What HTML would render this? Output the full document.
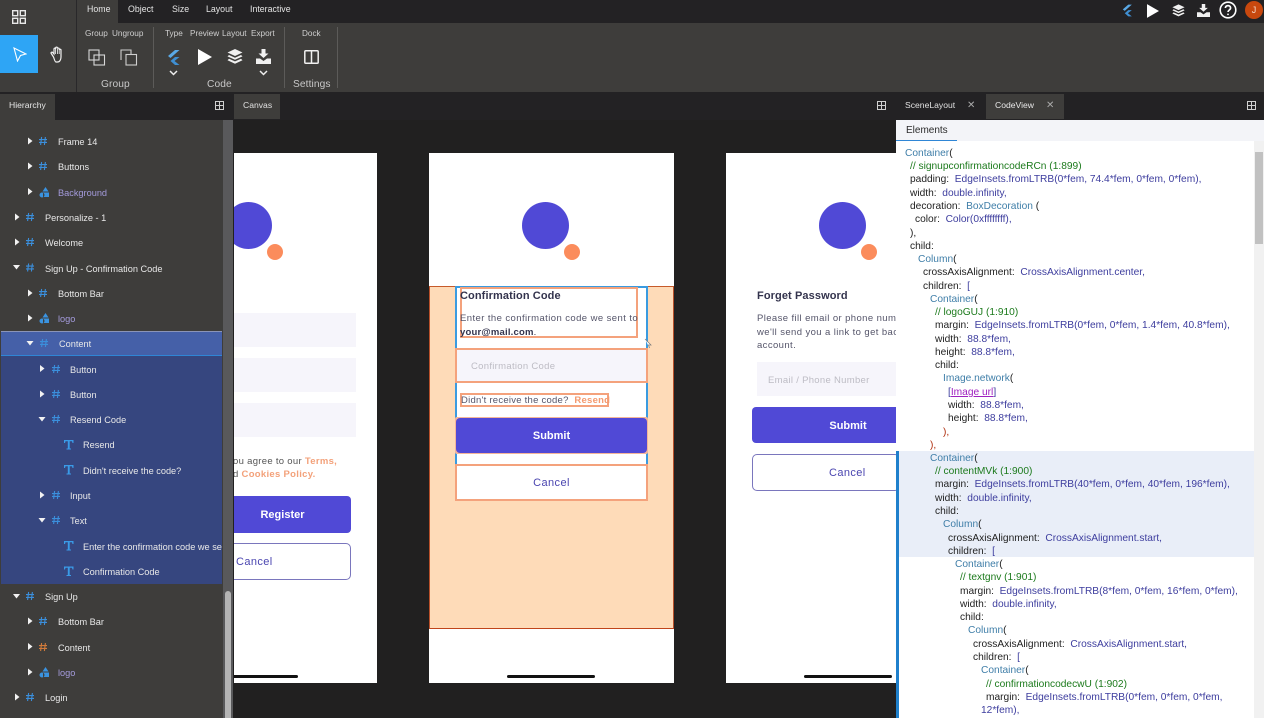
<!DOCTYPE html>
<html><head><meta charset="utf-8"><style>
html,body{margin:0;padding:0}
body{width:1264px;height:718px;overflow:hidden;position:relative;background:#212020;font-family:"Liberation Sans",sans-serif}
div,span.a,svg{position:absolute}
.t{white-space:pre;line-height:14px}
.rb{color:#cfcfcf;font-size:8.2px;top:27px}
.tab{color:#e4e4e4;font-size:8.8px;top:2px}
.sec{color:#c8c8c8;font-size:10.2px;top:78px;letter-spacing:.1px}
.tb{color:#e0e0e0;font-size:8.6px;top:98px}
.r{color:#e8e8e8;font-size:9.2px;white-space:pre;line-height:14px;margin-top:1px}
.c{font-size:10.2px;white-space:pre;line-height:14px;color:#222;margin-top:1px}
.v{color:#3d3d9e}.k{color:#3f7ea8}.g{color:#1c7a1c}
.ph{background:#fff;top:153px;height:530px}
.big{width:47px;height:47px;border-radius:50%;background:#5049d6;top:202px}
.sm{width:16px;height:16px;border-radius:50%;background:#fb8c5c;top:244px}
.inp{background:#f6f5fb}
.btn{background:#5049d6;border-radius:4px;color:#fff;font-weight:bold;font-size:11px;text-align:center}
.cn{background:#fff;border:1px solid #7a76bd;border-radius:5px;color:#4a45b0;font-size:11px;box-sizing:border-box;letter-spacing:.4px}
.p{white-space:pre;line-height:14px;margin-top:1px}
.bar{height:3px;background:#111;top:675px;border-radius:2px}
</style></head><body>

<!-- top bars -->
<div style="left:0;top:0;width:1264px;height:23px;background:#232224"></div>
<div style="left:0;top:0;width:77px;height:92px;background:#3e3d3b"></div>
<div style="left:77px;top:23px;width:1187px;height:69px;background:#3e3d3b"></div>
<div style="left:77px;top:0;width:41px;height:23px;background:#3e3d3b"></div>
<div style="left:76px;top:0;width:1px;height:92px;background:#29282a"></div>
<div style="left:0;top:92px;width:1264px;height:28px;background:#232224"></div>

<svg style="left:12px;top:10px" width="14" height="14" viewBox="0 0 14 14" fill="none" stroke="#e8e8e8" stroke-width="1.4"><rect x=".7" y=".7" width="5" height="5"/><rect x="8.3" y=".7" width="5" height="5"/><rect x=".7" y="8.3" width="5" height="5"/><rect x="8.3" y="8.3" width="5" height="5"/></svg>
<div style="left:0;top:35px;width:38px;height:38px;background:#2ea5f5"></div>
<svg style="left:13px;top:47px" width="14" height="15" viewBox="0 0 14 15" fill="none" stroke="#fff" stroke-width="1.1"><path d="M1 1L13 7L7.5 8.5L4.5 14Z"/></svg>
<svg style="left:50px;top:46px" width="15" height="17" viewBox="0 0 15 17" fill="#3e3d3b" stroke="#f2f2f2" stroke-width="1.2"><path d="M3.5 11L1.2 7.5C.6 6.3 2 5.6 2.8 6.6L4 8V3C4 1.8 5.6 1.8 5.6 3V1.9C5.6.8 7.4.8 7.4 1.9V2.8C7.4 1.8 9.2 1.8 9.2 3V4C9.2 3 11 3 11 4.2V11C11 14 9.5 16 7.5 16H6C4.8 16 4.2 12.5 3.5 11Z"/><path d="M5.6 3V8M7.4 3V8M9.2 4V8" stroke-width=".8"/></svg>

<div class="t tab" style="left:87px">Home</div>
<div class="t tab" style="left:128px">Object</div>
<div class="t tab" style="left:172px">Size</div>
<div class="t tab" style="left:206px">Layout</div>
<div class="t tab" style="left:250px">Interactive</div>

<div class="t rb" style="left:85px">Group</div>
<div class="t rb" style="left:112px">Ungroup</div>
<div class="t rb" style="left:165px">Type</div>
<div class="t rb" style="left:190px">Preview</div>
<div class="t rb" style="left:222px">Layout</div>
<div class="t rb" style="left:251px">Export</div>
<div class="t rb" style="left:302px">Dock</div>
<div class="t sec" style="left:101px">Group</div>
<div class="t sec" style="left:207px">Code</div>
<div class="t sec" style="left:293px">Settings</div>
<div style="left:153px;top:27px;width:1px;height:61px;background:#5c5b59"></div>
<div style="left:284px;top:27px;width:1px;height:61px;background:#5c5b59"></div>
<div style="left:337px;top:27px;width:1px;height:61px;background:#5c5b59"></div>

<svg style="left:88px;top:49px" width="18" height="17" viewBox="0 0 18 17" fill="none" stroke="#d8d8d8" stroke-width="1.1"><rect x="1" y="1" width="10" height="10"/><rect x="6" y="6" width="10.5" height="10"/></svg>
<svg style="left:120px;top:49px" width="18" height="17" viewBox="0 0 18 17" fill="none" stroke="#cfcfcf" stroke-width="1.1"><path d="M1 11V1H11V5"/><rect x="6" y="5.5" width="10.5" height="10.5"/></svg>
<svg style="left:167px;top:50px" width="14" height="15" viewBox="0 0 14 15"><path d="M8 0H12.5L3.5 8L1 6Z" fill="#5aa9e6"/><path d="M8 7H12.5L7.5 11L12.5 15H8L3.5 11Z" fill="#3f8fd2"/></svg>
<svg style="left:169px;top:70px" width="9" height="6" viewBox="0 0 9 6" fill="none" stroke="#eee" stroke-width="1.5"><path d="M1 1L4.5 4.5L8 1"/></svg>
<svg style="left:198px;top:49px" width="14" height="16" viewBox="0 0 14 16"><path d="M0 0L14 8L0 16Z" fill="#fff"/></svg>
<svg style="left:227px;top:49px" width="16" height="15" viewBox="0 0 16 15" fill="#f0f0f0"><path d="M8 0L15.5 3.5L8 7L.5 3.5Z"/><path d="M2 6L8 8.8L14 6L15.5 7.4L8 10.8L.5 7.4Z"/><path d="M2 9.8L8 12.4L14 9.8L15.5 11.2L8 14.8L.5 11.2Z"/></svg>
<svg style="left:256px;top:49px" width="15" height="15" viewBox="0 0 15 15" fill="#f0f0f0"><path d="M5.5 0H9.5V4.5H12.5L7.5 9L2.5 4.5H5.5Z"/><path d="M0 9.5H4L7.5 12L11 9.5H15V15H0Z"/></svg>
<svg style="left:259px;top:70px" width="9" height="6" viewBox="0 0 9 6" fill="none" stroke="#eee" stroke-width="1.5"><path d="M1 1L4.5 4.5L8 1"/></svg>
<svg style="left:304px;top:50px" width="15" height="14" viewBox="0 0 15 14" fill="none" stroke="#f0f0f0" stroke-width="1.5"><rect x=".8" y=".8" width="13.4" height="12.4" rx="1"/><path d="M7.5 1V13"/></svg>

<!-- top right -->
<svg style="left:1122px;top:4px" width="11" height="13" viewBox="0 0 14 15"><path d="M8 0H12.5L3.5 8L1 6Z" fill="#5aa9e6"/><path d="M8 7H12.5L7.5 11L12.5 15H8L3.5 11Z" fill="#3f8fd2"/></svg>
<svg style="left:1147px;top:4px" width="12" height="14" viewBox="0 0 14 16"><path d="M0 0L14 8L0 16Z" fill="#fff"/></svg>
<svg style="left:1172px;top:4px" width="13" height="13" viewBox="0 0 16 15" fill="#f0f0f0"><path d="M8 0L15.5 3.5L8 7L.5 3.5Z"/><path d="M2 6L8 8.8L14 6L15.5 7.4L8 10.8L.5 7.4Z"/><path d="M2 9.8L8 12.4L14 9.8L15.5 11.2L8 14.8L.5 11.2Z"/></svg>
<svg style="left:1197px;top:4px" width="13" height="13" viewBox="0 0 15 15" fill="#f0f0f0"><path d="M5.5 0H9.5V4.5H12.5L7.5 9L2.5 4.5H5.5Z"/><path d="M0 9.5H4L7.5 12L11 9.5H15V15H0Z"/></svg>
<svg style="left:1219px;top:1px" width="18" height="18" viewBox="0 0 18 18" fill="none" stroke="#fff" stroke-width="1.6"><circle cx="9" cy="9" r="7.8"/><path d="M6.4 7C6.4 3.8 11.6 3.8 11.6 7C11.6 9 9 9 9 11" stroke-width="1.7"/><circle cx="9" cy="13.4" r=".9" fill="#fff" stroke="none"/></svg>
<div style="left:1245px;top:1px;width:18px;height:18px;border-radius:50%;background:#c8480e;color:#f5d8c8;font-size:9px;line-height:18px;text-align:center">J</div>

<!-- tabs -->
<div style="left:0;top:94px;width:55px;height:26px;background:#3e3d3b"></div>
<div class="t tb" style="left:9px;color:#e8e8e8">Hierarchy</div>
<svg style="left:215px;top:101px" width="9" height="9" viewBox="0 0 9 9" fill="none" stroke="#cfcfcf"><rect x=".5" y=".5" width="8" height="8"/><path d="M4.5 0V9M0 4.5H9"/></svg>
<div style="left:234px;top:94px;width:46px;height:25px;background:#3e3d3b"></div>
<div class="t tb" style="left:243px">Canvas</div>
<svg style="left:877px;top:101px" width="9" height="9" viewBox="0 0 9 9" fill="none" stroke="#cfcfcf"><rect x=".5" y=".5" width="8" height="8"/><path d="M4.5 0V9M0 4.5H9"/></svg>
<div class="t tb" style="left:905px">SceneLayout</div>
<div class="t" style="left:967px;top:99px;color:#aaa;font-size:10px">✕</div>
<div style="left:986px;top:94px;width:78px;height:25px;background:#3e3d3b"></div>
<div class="t tb" style="left:995px;color:#e8e8e8">CodeView</div>
<div class="t" style="left:1046px;top:99px;color:#aaa;font-size:10px">✕</div>
<svg style="left:1247px;top:101px" width="9" height="9" viewBox="0 0 9 9" fill="none" stroke="#cfcfcf"><rect x=".5" y=".5" width="8" height="8"/><path d="M4.5 0V9M0 4.5H9"/></svg>

<!-- hierarchy -->
<div style="left:0;top:120px;width:223px;height:598px;background:#3e3d3b"></div>
<div style="left:223px;top:120px;width:10px;height:598px;background:#59595b"></div>
<div style="left:225px;top:591px;width:6px;height:127px;background:#b4b4b4;border-radius:3px 3px 0 0"></div>
<div style="left:1px;top:356px;width:221px;height:228px;background:#36467f"></div>
<div style="left:1px;top:331px;width:221px;height:25px;background:#4560a8;border-top:1px solid #8a94b8;border-bottom:1px solid #2f86d6;box-sizing:border-box"></div>

<div class="r" style="left:58px;top:134px">Frame 14</div>
<div class="r" style="left:58px;top:159px">Buttons</div>
<div class="r" style="left:58px;top:185px;color:#a49bdc">Background</div>
<div class="r" style="left:45px;top:210px">Personalize - 1</div>
<div class="r" style="left:45px;top:235px">Welcome</div>
<div class="r" style="left:45px;top:261px">Sign Up - Confirmation Code</div>
<div class="r" style="left:58px;top:286px">Bottom Bar</div>
<div class="r" style="left:58px;top:311px;color:#a49bdc">logo</div>
<div class="r" style="left:59px;top:336px">Content</div>
<div class="r" style="left:70px;top:362px">Button</div>
<div class="r" style="left:70px;top:387px">Button</div>
<div class="r" style="left:70px;top:412px">Resend Code</div>
<div class="r" style="left:83px;top:437px">Resend</div>
<div class="r" style="left:83px;top:463px">Didn't receive the code?</div>
<div class="r" style="left:70px;top:488px">Input</div>
<div class="r" style="left:70px;top:513px">Text</div>
<div class="r" style="left:83px;top:539px;width:139px;overflow:hidden">Enter the confirmation code we sent to your@mail.com</div>
<div class="r" style="left:83px;top:564px">Confirmation Code</div>
<div class="r" style="left:45px;top:589px">Sign Up</div>
<div class="r" style="left:58px;top:614px">Bottom Bar</div>
<div class="r" style="left:58px;top:640px">Content</div>
<div class="r" style="left:58px;top:665px;color:#a49bdc">logo</div>
<div class="r" style="left:45px;top:690px">Login</div>

<svg style="left:0;top:120px" width="223" height="598" viewBox="0 120 223 598">
<defs>
<path id="h" d="M2.6 0L1.6 8M6.4 0L5.4 8M0 2.6H8M0 5.4H8" stroke="#3b8fdc" stroke-width="1.1" fill="none"/>
<path id="ro" d="M0 -3.5L4.5 0L0 3.5Z" fill="#f2f2f2"/>
<path id="rd" d="M-3.5 -2L3.5 -2L0 2.5Z" fill="#f2f2f2"/>
<path id="sh" d="M6.5 0L9.5 4.5H3.5ZM4 5.5H10V10H4ZM3 5.5A2.500 2.500 0 1 0 3 10.500A2.500 2.500 0 1 0 3 5.500Z" fill="#3a93e0"/>
<path id="T" d="M0 0H9.5V3H8.500L8 1.200H5.700V8.500H7V9.500H2.500V8.500H3.800V1.200H1.500L1 3H0Z" fill="#3a9be8"/>
</defs>
<use href="#ro" x="28" y="141"/><use href="#h" x="39" y="137"/>
<use href="#ro" x="28" y="166"/><use href="#h" x="39" y="162"/>
<use href="#ro" x="28" y="191.5"/><use href="#sh" x="39" y="187"/>
<use href="#ro" x="15" y="217"/><use href="#h" x="26" y="213"/>
<use href="#ro" x="15" y="242"/><use href="#h" x="26" y="238"/>
<use href="#rd" x="16.500" y="267"/><use href="#h" x="26" y="263.500"/>
<use href="#ro" x="28" y="293"/><use href="#h" x="39" y="289"/>
<use href="#ro" x="28" y="318"/><use href="#sh" x="39" y="313"/>
<use href="#rd" x="30" y="343"/><use href="#h" x="40" y="339"/>
<use href="#ro" x="40" y="368.500"/><use href="#h" x="52" y="365"/>
<use href="#ro" x="40" y="394"/><use href="#h" x="52" y="390"/>
<use href="#rd" x="42" y="419"/><use href="#h" x="52" y="415"/>
<use href="#T" x="64" y="440"/>
<use href="#T" x="64" y="465"/>
<use href="#ro" x="40" y="495"/><use href="#h" x="52" y="491"/>
<use href="#rd" x="42" y="520"/><use href="#h" x="52" y="516"/>
<use href="#T" x="64" y="541"/>
<use href="#T" x="64" y="566.500"/>
<use href="#rd" x="16.500" y="596"/><use href="#h" x="26" y="592"/>
<use href="#ro" x="28" y="621"/><use href="#h" x="39" y="617"/>
<use href="#ro" x="28" y="646.500"/><path d="M2.6 0L1.6 8M6.4 0L5.4 8M0 2.600H8M0 5.400H8" transform="translate(39 643)" stroke="#d07a3a" stroke-width="1.1" fill="none"/>
<use href="#ro" x="28" y="672"/><use href="#sh" x="39" y="667"/>
<use href="#ro" x="15" y="697"/><use href="#h" x="26" y="693"/>
</svg>

<!-- phone 1 -->
<div style="left:234px;top:153px;width:143px;height:530px;background:#fff;overflow:hidden">
 <div class="big" style="left:-9px;top:49px"></div>
 <div class="sm" style="left:33px;top:91px"></div>
 <div class="inp" style="left:0;top:160px;width:122px;height:34px"></div>
 <div class="inp" style="left:0;top:205px;width:122px;height:34px"></div>
 <div class="inp" style="left:0;top:250px;width:122px;height:34px"></div>
 <div class="p" style="left:-1px;top:301px;font-size:9.5px;color:#555;letter-spacing:.3px">ou agree to our <b style="color:#f3a17a">Terms,</b></div>
 <div class="p" style="left:-1px;top:314px;font-size:9.5px;color:#555;letter-spacing:.3px">d <b style="color:#f3a17a">Cookies Policy.</b></div>
 <div class="btn" style="left:-20px;top:343px;width:137px;height:37px;line-height:39px">Register</div>
 <div class="cn" style="left:-60px;top:390px;width:177px;height:37px;line-height:37px;padding-left:61px">Cancel</div>
 <div class="bar" style="left:-20px;top:522px;width:84px"></div>
</div>

<!-- phone 2 -->
<div class="ph" style="left:429px;width:245px"></div>
<div class="big" style="left:522px"></div>
<div class="sm" style="left:564px"></div>
<div style="left:429px;top:286px;width:245px;height:343px;background:#fedbb8;border-top:1px solid #c65a2a;border-bottom:1px solid #c0441a;border-left:1px solid #b8502a;border-right:1px solid #b8502a;box-sizing:border-box"></div>
<div style="left:455px;top:287px;width:193px;height:178px;background:#fff;border-left:2px solid #3a9be0;border-right:2px solid #3a9be0;box-sizing:border-box"></div>
<div style="left:455px;top:286px;width:193px;height:2px;background:#3a9be0"></div>
<div style="left:460px;top:287px;width:178px;height:51px;border:2px solid #f4a27c;box-sizing:border-box"></div>
<div class="p" style="left:460px;top:288px;font-size:11px;font-weight:bold;color:#33334d;letter-spacing:.1px">Confirmation Code</div>
<div class="p" style="left:460px;top:311px;font-size:9.5px;color:#55556a;letter-spacing:.42px">Enter the confirmation code we sent to</div>
<div class="p" style="left:460px;top:325px;font-size:9.5px;color:#33334d;font-weight:bold;letter-spacing:.2px">your@mail.com<span style="font-weight:normal">.</span></div>
<div style="left:455px;top:348px;width:193px;height:35px;background:#f6f5fb;border:2px solid #f4a27c;box-sizing:border-box"></div>
<div class="p" style="left:471px;top:359px;font-size:9.5px;color:#bdbcc4;letter-spacing:.3px">Confirmation Code</div>
<div style="left:460px;top:393px;width:149px;height:14px;border:2px solid #f4a27c;box-sizing:border-box"></div>
<div class="p" style="left:461px;top:393px;font-size:9.5px;color:#55556a;letter-spacing:.25px">Didn't receive the code?  <b style="color:#f49a6f">Resend</b></div>
<div style="left:455px;top:417px;width:193px;height:37px;background:#f4b59a;border-radius:2px"></div>
<div class="btn" style="left:456px;top:418px;width:191px;height:35px;line-height:37px">Submit</div>
<div style="left:455px;top:464px;width:193px;height:37px;background:#fff;border:2px solid #f4a27c;box-sizing:border-box;color:#4a45b0;font-size:11px;text-align:center;line-height:35px;letter-spacing:.4px">Cancel</div>
<svg style="left:644px;top:338px" width="8" height="11" viewBox="0 0 8 11"><path d="M1 1L7 7L4.500 7L5.500 10" fill="#fff" stroke="#777" stroke-width=".7"/></svg>
<div class="bar" style="left:507px;width:88px"></div>

<!-- phone 3 -->
<div class="ph" style="left:726px;width:170px"></div>
<div class="big" style="left:819px"></div>
<div class="sm" style="left:861px"></div>
<div class="p" style="left:757px;top:288px;font-size:11px;font-weight:bold;color:#33334d;letter-spacing:.1px">Forget Password</div>
<div style="left:757px;top:311px;width:139px;height:50px;overflow:hidden">
<div class="p" style="left:0;top:0;font-size:9.5px;color:#55556a;letter-spacing:.4px">Please fill email or phone number</div>
<div class="p" style="left:0;top:13.500px;font-size:9.500px;color:#55556a;letter-spacing:.4px">we'll send you a link to get back</div>
<div class="p" style="left:0;top:27px;font-size:9.500px;color:#55556a;letter-spacing:.4px">account.</div>
</div>
<div class="inp" style="left:757px;top:362px;width:139px;height:34px"></div>
<div class="p" style="left:768px;top:373px;font-size:9.500px;color:#bdbcc4;letter-spacing:.3px">Email / Phone Number</div>
<div class="btn" style="left:752px;top:407px;width:144px;height:36px;line-height:38px;border-radius:4px 0 0 4px"><span style="position:relative;left:24px">Submit</span></div>
<div style="left:752px;top:454px;width:148px;height:37px;background:#fff;border:1px solid #7a76bd;border-radius:5px;box-sizing:border-box;color:#4a45b0;font-size:11px;line-height:37px;text-indent:76px;letter-spacing:.4px">Cancel</div>
<div class="bar" style="left:804px;width:88px"></div>

<!-- code panel -->
<div style="left:896px;top:120px;width:368px;height:598px;background:#fff"></div>
<div style="left:896px;top:120px;width:368px;height:21px;background:#f3f4f8"></div>
<div class="t" style="left:906px;top:124px;font-size:10px;color:#2a2a2a">Elements</div>
<div style="left:896px;top:140px;width:61px;height:1px;background:#2f86d6"></div>
<div style="left:1254px;top:141px;width:10px;height:577px;background:#f1f1f1"></div>
<div style="left:1255px;top:152px;width:8px;height:92px;background:#c1c1c1"></div>
<div style="left:899px;top:451px;width:355px;height:106px;background:#e9eef8"></div>
<div style="left:896px;top:451px;width:3px;height:267px;background:#1f80cc"></div>

<div class="c k" style="left:905px;top:146px">Container<span style="color:#222">(</span></div>
<div class="c g" style="left:910px;top:159px">// signupconfirmationcodeRCn (1:899)</div>
<div class="c" style="left:910px;top:172px">padding:  <span class="v">EdgeInsets.fromLTRB(0*fem, 74.4*fem, 0*fem, 0*fem),</span></div>
<div class="c" style="left:910px;top:186px">width:  <span class="v">double.infinity,</span></div>
<div class="c" style="left:910px;top:199px">decoration:  <span class="k">BoxDecoration</span> (</div>
<div class="c" style="left:915px;top:212px">color:  <span class="v">Color(0xffffffff),</span></div>
<div class="c" style="left:910px;top:226px">),</div>
<div class="c" style="left:910px;top:239px">child:</div>
<div class="c k" style="left:918px;top:252px">Column<span style="color:#222">(</span></div>
<div class="c" style="left:923px;top:265px">crossAxisAlignment:  <span class="v">CrossAxisAlignment.center,</span></div>
<div class="c" style="left:923px;top:279px">children:  <span class="v">[</span></div>
<div class="c k" style="left:930px;top:292px">Container<span style="color:#222">(</span></div>
<div class="c g" style="left:935px;top:305px">// logoGUJ (1:910)</div>
<div class="c" style="left:935px;top:318px">margin:  <span class="v">EdgeInsets.fromLTRB(0*fem, 0*fem, 1.4*fem, 40.8*fem),</span></div>
<div class="c" style="left:935px;top:332px">width:  <span class="v">88.8*fem,</span></div>
<div class="c" style="left:935px;top:345px">height:  <span class="v">88.8*fem,</span></div>
<div class="c" style="left:935px;top:358px">child:</div>
<div class="c k" style="left:943px;top:371px">Image.network<span style="color:#222">(</span></div>
<div class="c" style="left:948px;top:385px;color:#a020c0"><span class="v">[</span><u>Image url</u><span class="v">]</span></div>
<div class="c" style="left:948px;top:398px">width:  <span class="v">88.8*fem,</span></div>
<div class="c" style="left:948px;top:411px">height:  <span class="v">88.8*fem,</span></div>
<div class="c" style="left:943px;top:425px;color:#b03010">),</div>
<div class="c" style="left:930px;top:438px;color:#b03010">),</div>
<div class="c k" style="left:930px;top:451px">Container<span style="color:#222">(</span></div>
<div class="c g" style="left:935px;top:464px">// contentMVk (1:900)</div>
<div class="c" style="left:935px;top:477px">margin:  <span class="v">EdgeInsets.fromLTRB(40*fem, 0*fem, 40*fem, 196*fem),</span></div>
<div class="c" style="left:935px;top:491px">width:  <span class="v">double.infinity,</span></div>
<div class="c" style="left:935px;top:504px">child:</div>
<div class="c k" style="left:943px;top:517px">Column<span style="color:#222">(</span></div>
<div class="c" style="left:948px;top:531px">crossAxisAlignment:  <span class="v">CrossAxisAlignment.start,</span></div>
<div class="c" style="left:948px;top:544px">children:  <span class="v">[</span></div>
<div class="c k" style="left:955px;top:557px">Container<span style="color:#222">(</span></div>
<div class="c g" style="left:960px;top:570px">// textgnv (1:901)</div>
<div class="c" style="left:960px;top:584px">margin:  <span class="v">EdgeInsets.fromLTRB(8*fem, 0*fem, 16*fem, 0*fem),</span></div>
<div class="c" style="left:960px;top:597px">width:  <span class="v">double.infinity,</span></div>
<div class="c" style="left:960px;top:610px">child:</div>
<div class="c k" style="left:968px;top:623px">Column<span style="color:#222">(</span></div>
<div class="c" style="left:973px;top:637px">crossAxisAlignment:  <span class="v">CrossAxisAlignment.start,</span></div>
<div class="c" style="left:973px;top:650px">children:  <span class="v">[</span></div>
<div class="c k" style="left:981px;top:663px">Container<span style="color:#222">(</span></div>
<div class="c g" style="left:986px;top:677px">// confirmationcodecwU (1:902)</div>
<div class="c" style="left:986px;top:690px">margin:  <span class="v">EdgeInsets.fromLTRB(0*fem, 0*fem, 0*fem,</span></div>
<div class="c v" style="left:981px;top:703px">12*fem),</div>
</body></html>
